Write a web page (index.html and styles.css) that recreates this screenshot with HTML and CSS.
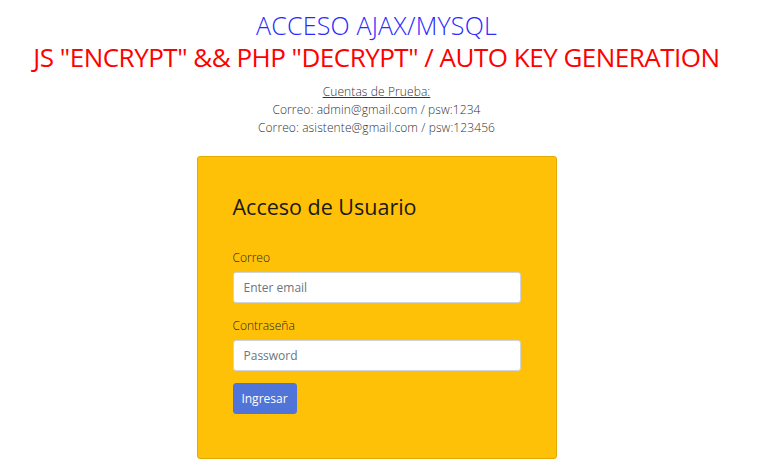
FILE: index.html
```html
<!DOCTYPE html>
<html lang="es">
<head>
<meta charset="utf-8">
<title>Acceso</title>
<link rel="stylesheet" href="styles.css">
</head>
<body>
<header class="head">
  <h1 class="title-main">ACCESO AJAX/MYSQL</h1>
  <h2 class="title-sub">JS "ENCRYPT" &amp;&amp; PHP "DECRYPT" / AUTO KEY GENERATION</h2>
  <div class="accounts">
    <p class="accounts-title">Cuentas de Prueba:</p>
    <p>Correo: admin@gmail.com / psw:1234</p>
    <p>Correo: asistente@gmail.com / psw:123456</p>
  </div>
</header>
<main class="card">
  <h3 class="card-title">Acceso de Usuario</h3>
  <form class="form">
    <label class="label" for="email">Correo</label>
    <input class="input" id="email" type="email" placeholder="Enter email">
    <label class="label label-gap" for="psw">Contraseña</label>
    <input class="input" id="psw" type="password" placeholder="Password">
    <button class="btn" type="button">Ingresar</button>
  </form>
</main>
</body>
</html>
```
FILE: styles.css
```css
* { box-sizing: border-box; }
body {
  margin: 0;
  padding-right: 8px;
  font-family: "Open Sans", "Noto Sans", sans-serif;
  color: #212529;
  background: #fff;
}
.head {
  display: flex;
  flex-direction: column;
  align-items: center;
  padding-top: 9px;
}
.title-main {
  margin: 0;
  font-weight: 300;
  font-size: 25px;
  line-height: 32px;
  color: #2a2aff;
  letter-spacing: 0.2px;
}
.title-sub {
  margin: 0;
  font-weight: 400;
  font-size: 26px;
  line-height: 32px;
  color: #ff0000;
  letter-spacing: -0.5px;
}
.accounts {
  margin-top: 10px;
  text-align: center;
  font-size: 12px;
  font-weight: 300;
  color: #333;
  letter-spacing: 0.1px;
}
.accounts p { margin: 0; line-height: 18px; }
.accounts-title { text-decoration: underline; }
.card {
  width: 360px;
  margin: 19px auto 0;
  background: #ffc107;
  border: 1px solid #e3aa00;
  border-radius: 3px;
  padding: 35px 35px 44px;
}
.card-title {
  margin: 0;
  font-weight: 400;
  font-size: 21.5px;
  line-height: 30px;
  color: #1a1a1a;
}
.form {
  display: flex;
  flex-direction: column;
  align-items: flex-start;
  margin-top: 28px;
}
.label {
  font-size: 12px;
  font-weight: 300;
  line-height: 16px;
  color: #212529;
  margin-bottom: 6px;
}
.label-gap { margin-top: 15px; }
.input {
  width: 288px;
  height: 31px;
  border: 1px solid #ced4da;
  border-radius: 3px;
  background: #fff;
  padding: 0 10px;
  font-family: inherit;
  font-size: 12px;
  color: #495057;
}
.input::placeholder { color: #6c757d; }
.btn {
  margin-top: 12px;
  width: 64px;
  height: 31px;
  border: 1px solid #4e73df;
  border-radius: 3px;
  background: #5074d8;
  color: #fff;
  font-family: inherit;
  font-size: 12px;
  padding: 0;
}
```
